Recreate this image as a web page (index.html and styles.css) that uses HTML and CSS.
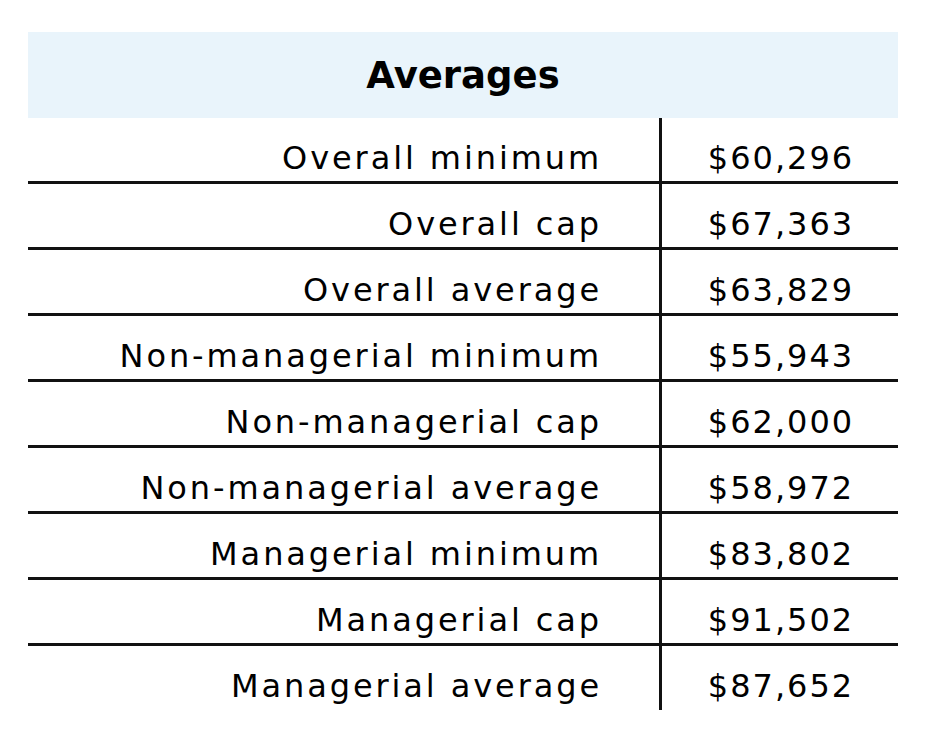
FILE: index.html
```html
<!DOCTYPE html>
<html lang="en">
<head>
<meta charset="utf-8">
<title>Averages</title>
<link rel="stylesheet" href="styles.css">
</head>
<body>
<div class="table">
  <div class="head">Averages</div>
  <div class="row"><div class="label">Overall minimum</div><div class="value">$60,296</div></div>
  <div class="row"><div class="label">Overall cap</div><div class="value">$67,363</div></div>
  <div class="row"><div class="label">Overall average</div><div class="value">$63,829</div></div>
  <div class="row"><div class="label">Non-managerial minimum</div><div class="value">$55,943</div></div>
  <div class="row"><div class="label">Non-managerial cap</div><div class="value">$62,000</div></div>
  <div class="row"><div class="label">Non-managerial average</div><div class="value">$58,972</div></div>
  <div class="row"><div class="label">Managerial minimum</div><div class="value">$83,802</div></div>
  <div class="row"><div class="label">Managerial cap</div><div class="value">$91,502</div></div>
  <div class="row"><div class="label">Managerial average</div><div class="value">$87,652</div></div>
</div>
</body>
</html>
```
FILE: styles.css
```css
html, body {
  margin: 0;
  padding: 0;
  background: #ffffff;
}
body {
  font-family: "DejaVu Sans", "Liberation Sans", sans-serif;
  color: #000;
}
.table {
  width: 870px;
  margin: 32px 0 0 28px;
}
.head {
  height: 86px;
  background: #e9f4fb;
  display: flex;
  align-items: center;
  justify-content: center;
  font-weight: 700;
  font-size: 37px;
}
.row {
  display: grid;
  grid-template-columns: 631px 1fr;
  height: 63px;
  border-bottom: 3px solid #111;
  font-size: 32px;
}
.row:first-of-type {
  height: 65px;
}
.row:last-child {
  border-bottom: none;
  height: 64px;
}
.label {
  display: flex;
  align-items: center;
  justify-content: flex-end;
  padding-right: 57px;
  padding-top: 16px;
  letter-spacing: 2.9px;
}
.value {
  display: flex;
  align-items: center;
  justify-content: center;
  border-left: 3px solid #111;
  padding-top: 16px;
  padding-left: 2px;
  letter-spacing: 2px;
}
```
